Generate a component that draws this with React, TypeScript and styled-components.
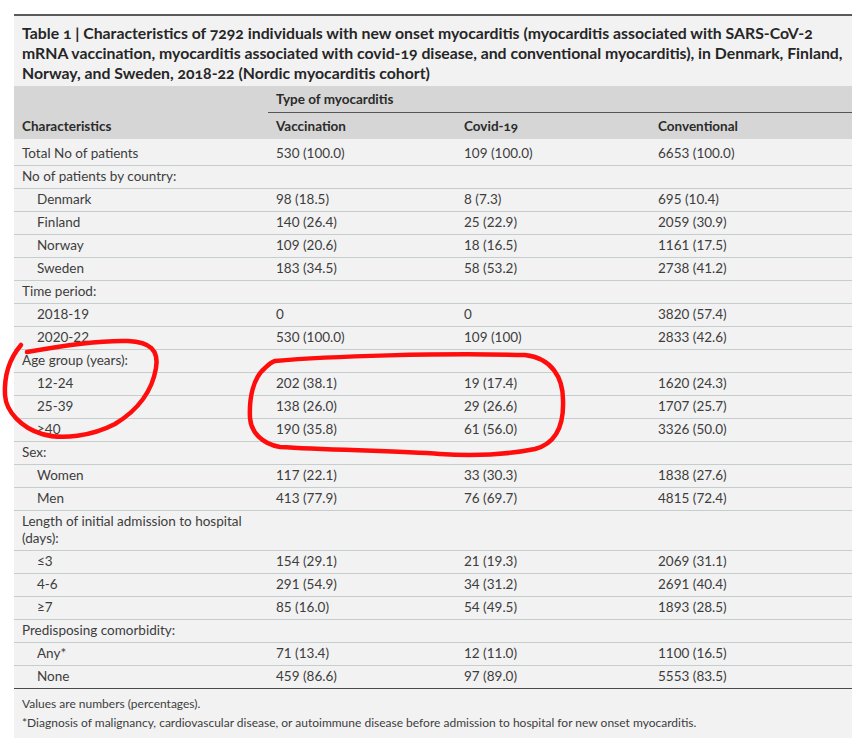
import React from "react";
import styled, { createGlobalStyle } from "styled-components";

const Global = createGlobalStyle`
  html, body { margin: 0; padding: 0; background: #ffffff; }
  body { font-family: Lato, "Open Sans", "Liberation Sans", sans-serif; }
`;

const Page = styled.div`
  position: relative;
  width: 867px;
  height: 752px;
  padding: 14px 15px 0 14px;
  box-sizing: border-box;
`;

const Panel = styled.section`
  background: #f2f2f2;
  border-top: 2px solid #5a5a5a;
  width: 838px;
  padding-bottom: 6px;
`;

const Caption = styled.h1`
  margin: 0;
  padding: 7px 8px 3px 8px;
  font-size: 15.8px;
  line-height: 20px;
  font-weight: 700;
  color: #262626;
  white-space: nowrap;
  font-variant-numeric: oldstyle-nums;
`;

const Table = styled.table`
  width: 838px;
  border-collapse: collapse;
  table-layout: fixed;
  font-size: 13.5px;
  color: #3d3d3d;
`;

const HeadRow = styled.tr`
  background: #d6d6d6;
`;

const HeadCell = styled.th<{ $spanLine?: boolean }>`
  text-align: left;
  font-weight: 700;
  color: #2b2b2b;
  padding: 5px 8px 4px 8px;
  height: 17px;
  line-height: 17px;
  font-variant-numeric: oldstyle-nums;
  border-bottom: ${(p) => (p.$spanLine ? "1.5px solid #555" : "none")};
  vertical-align: middle;
`;

const Row = styled.tr<{ $first?: boolean }>`
  border-bottom: 1px solid #c6cdcd;
  & > td {
    padding-top: ${(p) => (p.$first ? "6px" : "2px")};
  }
  &:last-child {
    border-bottom: 1.5px solid #4a4a4a;
  }
`;

const Cell = styled.td<{ $indent?: boolean }>`
  padding: 2px 8px 3px ${(p) => (p.$indent ? "23px" : "8px")};
  line-height: 17px;
  vertical-align: top;
  font-weight: 400;
`;

const Notes = styled.div`
  padding: 5px 8px 0 8px;
  font-size: 12px;
  line-height: 19px;
  color: #3d3d3d;
`;

const Overlay = styled.svg`
  position: absolute;
  top: 0;
  left: 0;
  pointer-events: none;
`;

type R = { label: string; indent?: boolean; v?: [string, string, string] };

const rows: R[] = [
  { label: "Total No of patients", v: ["530 (100.0)", "109 (100.0)", "6653 (100.0)"] },
  { label: "No of patients by country:" },
  { label: "Denmark", indent: true, v: ["98 (18.5)", "8 (7.3)", "695 (10.4)"] },
  { label: "Finland", indent: true, v: ["140 (26.4)", "25 (22.9)", "2059 (30.9)"] },
  { label: "Norway", indent: true, v: ["109 (20.6)", "18 (16.5)", "1161 (17.5)"] },
  { label: "Sweden", indent: true, v: ["183 (34.5)", "58 (53.2)", "2738 (41.2)"] },
  { label: "Time period:" },
  { label: "2018-19", indent: true, v: ["0", "0", "3820 (57.4)"] },
  { label: "2020-22", indent: true, v: ["530 (100.0)", "109 (100)", "2833 (42.6)"] },
  { label: "Age group (years):" },
  { label: "12-24", indent: true, v: ["202 (38.1)", "19 (17.4)", "1620 (24.3)"] },
  { label: "25-39", indent: true, v: ["138 (26.0)", "29 (26.6)", "1707 (25.7)"] },
  { label: "≥40", indent: true, v: ["190 (35.8)", "61 (56.0)", "3326 (50.0)"] },
  { label: "Sex:" },
  { label: "Women", indent: true, v: ["117 (22.1)", "33 (30.3)", "1838 (27.6)"] },
  { label: "Men", indent: true, v: ["413 (77.9)", "76 (69.7)", "4815 (72.4)"] },
  { label: "Length of initial admission to hospital (days):" },
  { label: "≤3", indent: true, v: ["154 (29.1)", "21 (19.3)", "2069 (31.1)"] },
  { label: "4-6", indent: true, v: ["291 (54.9)", "34 (31.2)", "2691 (40.4)"] },
  { label: "≥7", indent: true, v: ["85 (16.0)", "54 (49.5)", "1893 (28.5)"] },
  { label: "Predisposing comorbidity:" },
  { label: "Any*", indent: true, v: ["71 (13.4)", "12 (11.0)", "1100 (16.5)"] },
  { label: "None", indent: true, v: ["459 (86.6)", "97 (89.0)", "5553 (83.5)"] },
];

export default function App() {
  return (
    <Page>
      <Global />
      <Panel>
        <Caption>
          Table 1 | Characteristics of 7292 individuals with new onset myocarditis (myocarditis associated with SARS-CoV-2
          <br />
          mRNA vaccination, myocarditis associated with covid-19 disease, and conventional myocarditis), in Denmark, Finland,
          <br />
          Norway, and Sweden, 2018-22 (Nordic myocarditis cohort)
        </Caption>
        <Table>
          <colgroup>
            <col style={{ width: 254 }} />
            <col style={{ width: 188 }} />
            <col style={{ width: 194 }} />
            <col style={{ width: 202 }} />
          </colgroup>
          <thead>
            <HeadRow>
              <HeadCell />
              <HeadCell $spanLine colSpan={3}>
                Type of myocarditis
              </HeadCell>
            </HeadRow>
            <HeadRow>
              <HeadCell>Characteristics</HeadCell>
              <HeadCell>Vaccination</HeadCell>
              <HeadCell>Covid-19</HeadCell>
              <HeadCell>Conventional</HeadCell>
            </HeadRow>
          </thead>
          <tbody>
            {rows.map((r, i) => (
              <Row key={i} $first={i === 0}>
                <Cell $indent={r.indent}>{r.label}</Cell>
                <Cell>{r.v ? r.v[0] : ""}</Cell>
                <Cell>{r.v ? r.v[1] : ""}</Cell>
                <Cell>{r.v ? r.v[2] : ""}</Cell>
              </Row>
            ))}
          </tbody>
        </Table>
        <Notes>
          <div>Values are numbers (percentages).</div>
          <div>
            *Diagnosis of malignancy, cardiovascular disease, or autoimmune disease before admission to hospital for new onset
            myocarditis.
          </div>
        </Notes>
      </Panel>
      <Overlay width="867" height="752" viewBox="0 0 867 752">
        <path
          d="M21 345 C 10 358, 4 375, 5 395 C 6 412, 22 428, 42 434 C 62 440, 92 436, 115 424 C 138 410, 152 392, 156 368 C 159 350, 150 342, 128 341 C 100 340, 60 346, 27 352"
          fill="none"
          stroke="#ff0d0d"
          strokeWidth="4.5"
          strokeLinecap="round"
          strokeLinejoin="round"
        />
        <path
          d="M275 361 C 330 356, 440 353, 525 355 C 552 358, 563 378, 563 400 C 564 425, 557 443, 535 449 C 505 455, 470 456, 440 454 C 400 451, 330 450, 280 447 C 262 444, 251 432, 250 418 C 249 398, 253 378, 265 368 C 268 365, 271 362, 275 361 Z"
          fill="none"
          stroke="#ff0d0d"
          strokeWidth="4.5"
          strokeLinecap="round"
          strokeLinejoin="round"
        />
      </Overlay>
    </Page>
  );
}
